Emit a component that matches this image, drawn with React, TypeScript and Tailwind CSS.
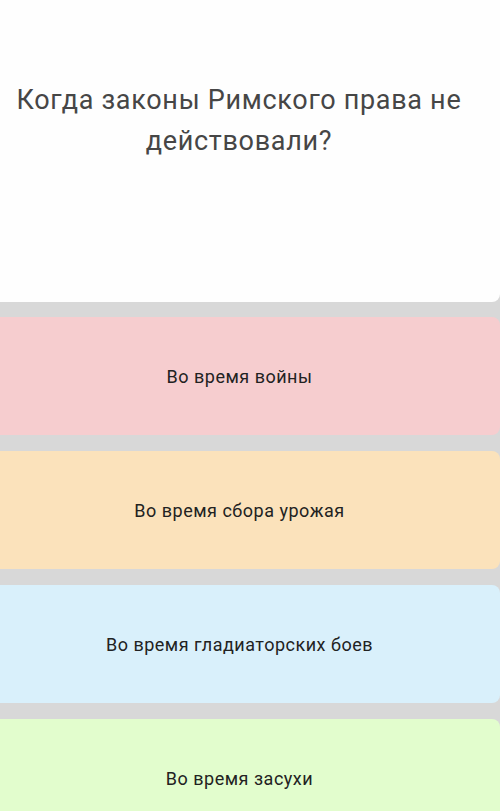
const answers = [
  { text: 'Во время войны', bg: 'bg-[#f6cdcf]' },
  { text: 'Во время сбора урожая', bg: 'bg-[#fbe2bb]' },
  { text: 'Во время гладиаторских боев', bg: 'bg-[#d9f0fb]' },
  { text: 'Во время засухи', bg: 'bg-[#e2fdcd]' },
];

export default function App() {
  return (
    <div className="h-[811px] overflow-hidden bg-[#d8d8d8] font-['Roboto',sans-serif]">
      <div className="-ml-3 flex h-[302px] w-[512px] flex-col rounded-br-lg bg-[#fefefe] pl-3 pr-[22px] pt-[80px]">
        <h1 className="text-center text-[27px] leading-[41px] tracking-[0.7px] text-[#464646]">
          Когда законы Римского права не действовали?
        </h1>
      </div>
      <div className="mt-[15px] flex flex-col gap-4">
        {answers.map((a) => (
          <div
            key={a.text}
            className={`-ml-3 flex h-[118px] w-[512px] items-center justify-center rounded-lg pl-3 pr-[21px] ${a.bg}`}
          >
            <span className="text-[18px] tracking-[0.5px] text-[#222]">{a.text}</span>
          </div>
        ))}
      </div>
    </div>
  );
}
